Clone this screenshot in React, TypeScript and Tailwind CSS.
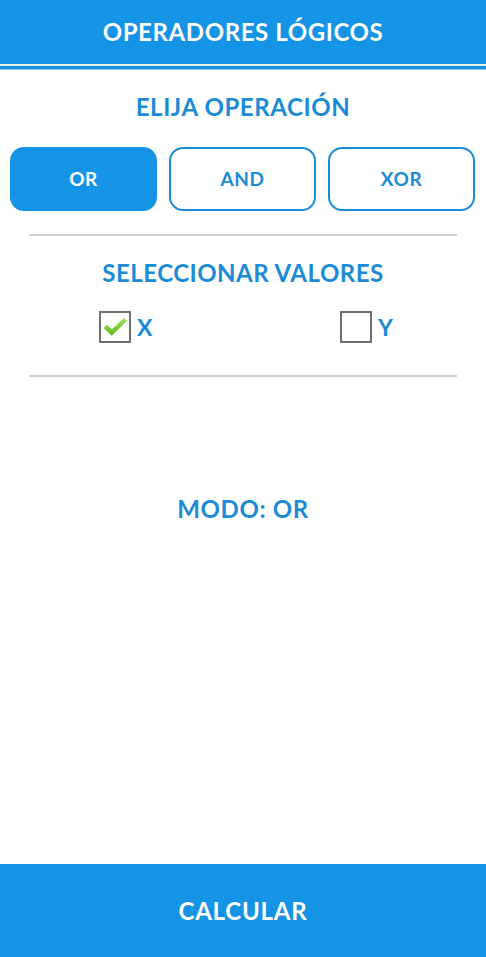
export default function App() {
  const font = { fontFamily: '"Lato", "Open Sans", sans-serif' };
  return (
    <div className="w-[486px] h-[957px] bg-white flex flex-col" style={font}>
      <div className="h-[64px] bg-[#1593e5] flex items-center justify-center">
        <span className="text-white font-bold text-[24px] tracking-[0.6px]">OPERADORES LÓGICOS</span>
      </div>
      <div className="h-[2px] bg-[#e6f4fc]" />
      <div className="h-[3px] bg-[#1593e5]" />
      <div className="h-[1px] bg-[#8ccbf2]" />
      <div className="flex-1 flex flex-col">
        <div className="h-[72px] flex items-center justify-center pt-[2px]">
          <span className="text-[#1a8bd6] font-bold text-[24px] tracking-[0.6px]">ELIJA OPERACIÓN</span>
        </div>
        <div className="flex gap-[12px] px-[10px] pt-[5px]">
          <div className="w-[147px] h-[64px] rounded-[14px] bg-[#1593e5] flex items-center justify-center text-white font-bold text-[19px] tracking-[0.5px]">OR</div>
          <div className="w-[147px] h-[64px] rounded-[14px] border-2 border-[#1a8bd6] flex items-center justify-center text-[#1a8bd6] font-bold text-[19px] tracking-[0.5px]">AND</div>
          <div className="w-[147px] h-[64px] rounded-[14px] border-2 border-[#1a8bd6] flex items-center justify-center text-[#1a8bd6] font-bold text-[19px] tracking-[0.5px]">XOR</div>
        </div>
        <div className="mx-[29px] mt-[23px] h-[2px] bg-[#cfcfcf]" />
        <div className="h-[74px] flex items-center justify-center">
          <span className="text-[#1a8bd6] font-bold text-[24px] tracking-[0.5px]">SELECCIONAR VALORES</span>
        </div>
        <div className="flex items-center h-[32px] mt-[1px]">
          <div className="w-[241px] flex items-center pl-[99px]">
            <div className="w-[32px] h-[32px] border-2 border-[#707070] flex items-center justify-center">
              <svg width="26" height="22" viewBox="0 0 24 20">
                <defs>
                  <linearGradient id="g" x1="0" y1="0" x2="0" y2="1">
                    <stop offset="0" stopColor="#a5e65a" />
                    <stop offset="1" stopColor="#5cb51d" />
                  </linearGradient>
                </defs>
                <path d="M1.5 11 L4.5 8 L9 12 L20.5 1.5 L23 4.5 L9 18 Z" fill="url(#g)" strokeLinejoin="round" />
              </svg>
            </div>
            <span className="ml-[6px] text-[#1a8bd6] font-bold text-[23px]">X</span>
          </div>
          <div className="flex items-center pl-[99px]">
            <div className="w-[32px] h-[32px] border-2 border-[#707070]" />
            <span className="ml-[6px] text-[#1a8bd6] font-bold text-[23px]">Y</span>
          </div>
        </div>
        <div className="mx-[29px] mt-[32px] h-[2px] bg-[#cfcfcf]" />
        <div className="flex justify-center mt-[114px]">
          <span className="text-[#1a8bd6] font-bold text-[24px] tracking-[0.6px]">MODO: OR</span>
        </div>
      </div>
      <div className="h-[93px] bg-[#1593e5] flex items-center justify-center">
        <span className="text-white font-bold text-[24px] tracking-[0.8px]">CALCULAR</span>
      </div>
    </div>
  );
}
